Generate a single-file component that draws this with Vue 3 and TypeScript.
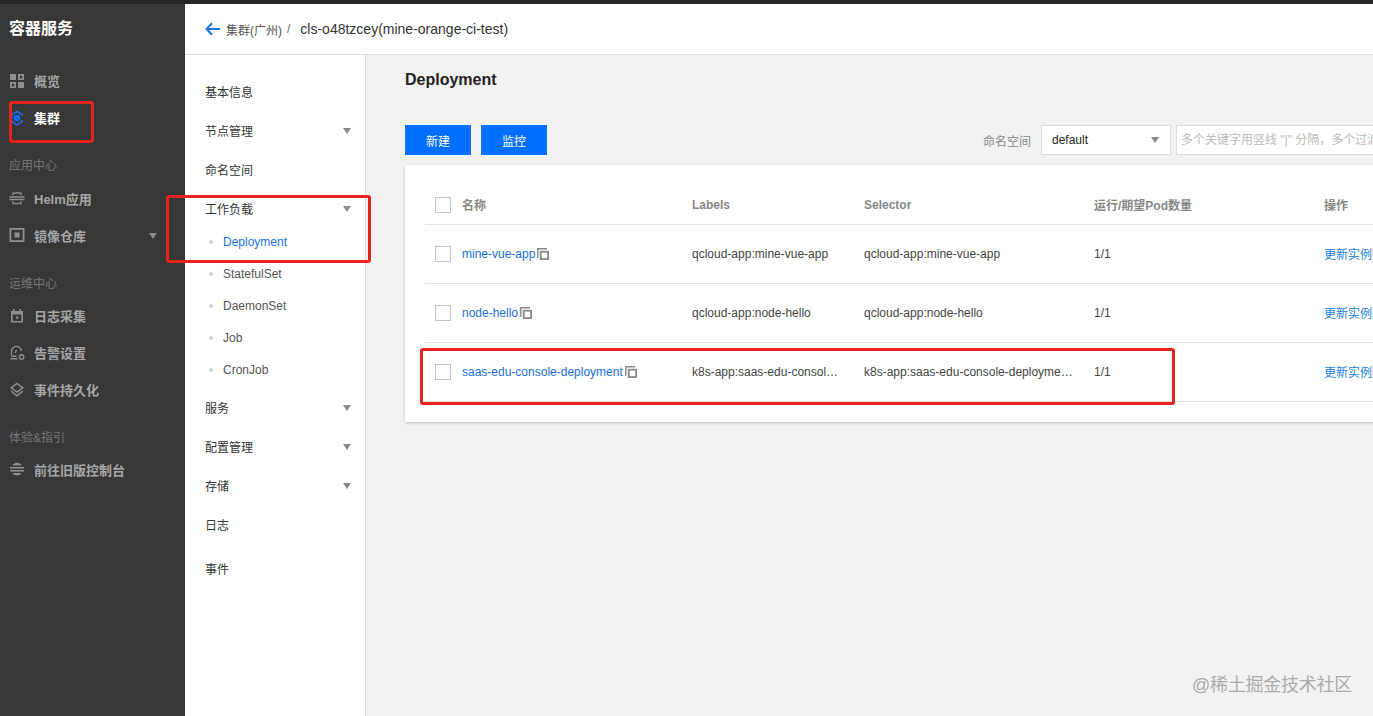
<template>
  <div class="page">
    <div class="topbar"></div>
    <div class="body">
      <aside class="sidebar">
        <div class="brand">容器服务</div>
        <template v-for="item in navItems" :key="item.text">
          <div v-if="item.group" class="nav-group">{{ item.text }}</div>
          <div v-else class="nav-item" :class="{ active: item.active }">
            <svg class="nav-icon" viewBox="0 0 16 16" width="16" height="16">
              <g v-if="item.icon === 'grid'" fill="#8f8f8f">
                <rect x="1" y="1" width="6" height="6" />
                <path d="M9 1h6v6H9zM10.8 2.8v2.4h2.4V2.8z" fill-rule="evenodd" />
                <path d="M1 9h6v6H1zM2.8 10.8v2.4h2.4v-2.4z" fill-rule="evenodd" />
                <rect x="9" y="9" width="6" height="6" />
              </g>
              <g v-else-if="item.icon === 'cluster'">
                <path d="M2.8 8V4.6L8 1.5l5.2 3.1v1.4M2.8 10v1.4L8 14.9l5.2-3.5V10" fill="none" stroke="#2468d6" stroke-width="1.8" />
                <circle cx="8" cy="8" r="3.3" fill="#0a6cff" />
              </g>
              <g v-else-if="item.icon === 'helm'" fill="none" stroke="#8f8f8f" stroke-width="1.3">
                <path d="M0.5 7h15M0.5 9.5h15" />
                <path d="M3 5C5 2 11 2 13 5M3 11.5C5 14.5 11 14.5 13 11.5" />
                <path d="M3.8 2l1 1.6M12.2 2l-1 1.6M3.8 14.5l1-1.6M12.2 14.5l-1-1.6" />
              </g>
              <g v-else-if="item.icon === 'repo'" fill="none" stroke="#8f8f8f">
                <rect x="1.4" y="1.9" width="13.2" height="12.2" stroke-width="1.8" />
                <rect x="5.5" y="5.5" width="5" height="5" fill="#8f8f8f" stroke="none" />
              </g>
              <g v-else-if="item.icon === 'calendar'" fill="#8f8f8f">
                <path d="M2 3h12v11.5H2zM3.6 6.4v6.5h8.8V6.4z" fill-rule="evenodd" />
                <rect x="4" y="1" width="1.6" height="3" />
                <rect x="10.4" y="1" width="1.6" height="3" />
                <rect x="7" y="8.5" width="2.2" height="2.2" />
              </g>
              <g v-else-if="item.icon === 'alert'" fill="none" stroke="#8f8f8f" stroke-width="1.4">
                <path d="M2.5 10.5V7a5 5 0 0 1 10-1.2" />
                <path d="M1.5 13.8h7M2.5 11.2h5" />
                <path d="M6 8l1.5-3" />
                <circle cx="12.6" cy="12" r="2.2" />
              </g>
              <g v-else-if="item.icon === 'layers'" fill="none" stroke="#8f8f8f" stroke-width="1.5">
                <path d="M8 1.5l5.8 4.3L8 10 2.2 5.8z" />
                <path d="M2.2 9.2L8 13.8l5.8-4.6" />
              </g>
              <g v-else fill="#8f8f8f">
                <path d="M3.4 4.4C4.4 2.6 6 1.8 8 1.8s3.6.8 4.6 2.6z" />
                <rect x="1" y="6" width="14" height="1.6" />
                <rect x="1" y="9" width="14" height="1.6" />
                <path d="M3.4 12c1 1.6 2.6 2.4 4.6 2.4s3.6-.8 4.6-2.4z" />
              </g>
            </svg>
            <span>{{ item.text }}</span>
            <i v-if="item.caret" class="caret nav-caret"></i>
          </div>
        </template>
      </aside>

      <div class="content">
        <header class="header">
          <svg class="back" viewBox="0 0 16 14" width="16" height="14">
            <path d="M7 1.2L1.6 7 7 12.8M1.8 7H15" fill="none" stroke="#1a73e8" stroke-width="2" />
          </svg>
          <span class="crumb">集群(广州)</span>
          <span class="crumb-sep">/</span>
          <span class="crumb-current">cls-o48tzcey(mine-orange-ci-test)</span>
        </header>

        <div class="columns">
          <nav class="submenu">
            <template v-for="m in menuItems" :key="m.text">
              <div v-if="m.sub" class="sub-item" :class="{ current: m.current }">
                <i class="dot"></i>{{ m.text }}
              </div>
              <div v-else class="menu-item" :class="{ last: m.last }">
                <span>{{ m.text }}</span>
                <i v-if="m.caret" class="caret"></i>
              </div>
            </template>
          </nav>

          <main class="main">
            <h2 class="title">Deployment</h2>
            <div class="toolbar">
              <button class="btn">新建</button>
              <button class="btn">监控</button>
              <div class="filters">
                <span class="filter-label">命名空间</span>
                <div class="select">default<i class="caret"></i></div>
                <div class="search">多个关键字用竖线 "|" 分隔，多个过滤标签用回车键分隔</div>
              </div>
            </div>

            <section class="card">
              <div class="row head">
                <div class="name-cell"><i class="check"></i>名称</div>
                <div>Labels</div>
                <div>Selector</div>
                <div>运行/期望Pod数量</div>
                <div>操作</div>
              </div>
              <div v-for="r in rows" :key="r.name" class="row">
                <div class="name-cell">
                  <i class="check"></i>
                  <a class="link">{{ r.name }}</a>
                  <svg class="copy" viewBox="0 0 12 12" width="12" height="12">
                    <path d="M0.8 10V0.8H10" fill="none" stroke="#888" stroke-width="1.4" />
                    <rect x="3.7" y="3.7" width="7.4" height="7.4" fill="none" stroke="#888" stroke-width="1.8" />
                  </svg>
                </div>
                <div class="ellipsis">{{ r.labels }}</div>
                <div class="ellipsis">{{ r.selector }}</div>
                <div>1/1</div>
                <div class="action">更新实例数量</div>
              </div>
            </section>
          </main>
        </div>
      </div>
    </div>

    <!-- 标注用的红框 -->
    <div class="mark mark-nav"></div>
    <div class="mark mark-menu"></div>
    <div class="mark mark-row"></div>
    <div class="watermark">@稀土掘金技术社区</div>
  </div>
</template>

<script setup lang="ts">
interface NavItem {
  text: string;
  icon?: string;
  group?: boolean;
  active?: boolean;
  caret?: boolean;
}

interface MenuItem {
  text: string;
  caret?: boolean;
  sub?: boolean;
  current?: boolean;
  last?: boolean;
}

const navItems: NavItem[] = [
  { text: '概览', icon: 'grid' },
  { text: '集群', icon: 'cluster', active: true },
  { text: '应用中心', group: true },
  { text: 'Helm应用', icon: 'helm' },
  { text: '镜像仓库', icon: 'repo', caret: true },
  { text: '运维中心', group: true },
  { text: '日志采集', icon: 'calendar' },
  { text: '告警设置', icon: 'alert' },
  { text: '事件持久化', icon: 'layers' },
  { text: '体验&指引', group: true },
  { text: '前往旧版控制台', icon: 'stack' }
];

const menuItems: MenuItem[] = [
  { text: '基本信息' },
  { text: '节点管理', caret: true },
  { text: '命名空间' },
  { text: '工作负载', caret: true },
  { text: 'Deployment', sub: true, current: true },
  { text: 'StatefulSet', sub: true },
  { text: 'DaemonSet', sub: true },
  { text: 'Job', sub: true },
  { text: 'CronJob', sub: true },
  { text: '服务', caret: true },
  { text: '配置管理', caret: true },
  { text: '存储', caret: true },
  { text: '日志' },
  { text: '事件', last: true }
];

const rows = [
  { name: 'mine-vue-app', labels: 'qcloud-app:mine-vue-app', selector: 'qcloud-app:mine-vue-app' },
  { name: 'node-hello', labels: 'qcloud-app:node-hello', selector: 'qcloud-app:node-hello' },
  {
    name: 'saas-edu-console-deployment',
    // 截图里这两列已被截断
    labels: 'k8s-app:saas-edu-consol…',
    selector: 'k8s-app:saas-edu-console-deployme…'
  }
];
</script>

<style>
html,
body {
  margin: 0;
  overflow: hidden;
}
</style>

<style scoped>
.page {
  position: relative;
  width: 1373px;
  height: 716px;
  overflow: hidden;
  background: #f2f2f2;
  font-family: "Liberation Sans", "Noto Sans CJK SC", sans-serif;
  font-size: 12px;
  color: #444;
}

.topbar {
  height: 4px;
  background: #262626;
}

.body {
  display: flex;
  height: 712px;
}

.sidebar {
  width: 185px;
  flex: none;
  background: #373737;
  padding-left: 9px;
  box-sizing: border-box;
}

.brand {
  height: 50px;
  line-height: 50px;
  font-size: 16px;
  font-weight: 700;
  color: #fff;
  margin-bottom: 8px;
}

.nav-item {
  position: relative;
  display: flex;
  align-items: center;
  height: 37px;
  font-weight: 700;
  font-size: 13px;
  color: #a6a6a6;
}

.nav-item.active {
  color: #fff;
}

.nav-icon {
  flex: none;
  margin-right: 9px;
}

.nav-caret {
  position: absolute;
  left: 140px;
  top: 16px;
}

.nav-group {
  height: 28.5px;
  line-height: 30.5px;
  margin-top: 15px;
  color: #777;
}

.nav-group:nth-last-child(2) {
  height: 27.5px;
}

.caret {
  display: block;
  width: 0;
  height: 0;
  border-left: 4.5px solid transparent;
  border-right: 4.5px solid transparent;
  border-top: 6px solid #8b8b8b;
}

.content {
  flex: 1;
  min-width: 0;
  display: flex;
  flex-direction: column;
}

.header {
  height: 50px;
  flex: none;
  display: flex;
  align-items: center;
  background: #fff;
  border-bottom: 1px solid #ddd;
  padding-left: 20px;
}

.back {
  margin-right: 5px;
}

.crumb {
  color: #555;
}

.crumb-sep {
  margin: 0 10px 0 5px;
  color: #666;
}

.crumb-current {
  font-size: 14px;
  color: #333;
}

.columns {
  flex: 1;
  display: flex;
  min-height: 0;
}

.submenu {
  width: 181px;
  flex: none;
  box-sizing: border-box;
  background: #fff;
  border-right: 1px solid #ddd;
  padding-top: 17px;
}

.menu-item {
  display: flex;
  align-items: center;
  justify-content: space-between;
  height: 39px;
  padding: 0 14px 0 20px;
  color: #333;
}

.menu-item.last {
  margin-top: 5px;
}

.menu-item + .sub-item {
  margin-top: -2px;
}

.sub-item + .menu-item {
  margin-top: 2px;
}

.sub-item {
  display: flex;
  align-items: center;
  height: 32px;
  padding-left: 24px;
  color: #555;
}

.sub-item.current {
  color: #1a6fdc;
}

.dot {
  width: 4px;
  height: 4px;
  border-radius: 50%;
  background: #d5d5d5;
  margin-right: 10px;
}

.main {
  flex: 1;
  min-width: 0;
  padding-left: 39px;
}

.title {
  margin: 0;
  padding-top: 15px;
  height: 40px;
  line-height: 20px;
  font-size: 16px;
  font-weight: 700;
  color: #222;
  box-sizing: content-box;
}

.toolbar {
  display: flex;
  align-items: center;
  gap: 10px;
  margin-top: 15px;
  height: 30px;
}

.btn {
  flex: none;
  width: 66px;
  height: 30px;
  border: 0;
  padding: 0;
  background: #006eff;
  color: #fff;
  font: inherit;
}

.filters {
  display: flex;
  align-items: center;
  margin-left: 426px;
  flex: none;
}

.filter-label {
  width: 58px;
  color: #888;
}

.select {
  display: flex;
  align-items: center;
  justify-content: space-between;
  width: 130px;
  height: 30px;
  box-sizing: border-box;
  padding: 0 11px 0 10px;
  background: #fff;
  border: 1px solid #ddd;
  color: #222;
}

.search {
  width: 197px;
  height: 30px;
  box-sizing: border-box;
  margin-left: 5px;
  padding-left: 4px;
  line-height: 28px;
  background: #fff;
  border: 1px solid #ddd;
  border-right: 0;
  color: #bbb;
  white-space: nowrap;
  overflow: hidden;
}

.card {
  width: 1100px;
  height: 257px;
  margin-top: 10px;
  padding: 20px 0 0 20px;
  box-sizing: border-box;
  background: #fff;
  box-shadow: 0 1px 3px rgba(0, 0, 0, 0.22);
}

.row {
  display: grid;
  grid-template-columns: 267px 172px 230px 230px 1fr;
  align-items: center;
  height: 58px;
  border-bottom: 1px solid #e3e3e3;
}

.row.head {
  height: 39px;
  font-weight: 700;
  color: #888;
}

.name-cell {
  display: flex;
  align-items: center;
  padding-left: 10px;
}

.check {
  flex: none;
  width: 14px;
  height: 14px;
  margin-right: 11px;
  background: #fff;
  border: 1px solid #c4c4c4;
}

.link {
  color: #1a6fdc;
}

.copy {
  margin-left: 2px;
}

.ellipsis {
  padding-right: 20px;
  white-space: nowrap;
  overflow: hidden;
  text-overflow: ellipsis;
}

.action {
  margin-bottom: 2px;
  color: #1a7fe0;
  white-space: nowrap;
}

.mark {
  position: absolute;
  box-sizing: border-box;
  border: 3px solid #e6231c;
  border-radius: 3px;
}

.mark-nav {
  left: 9px;
  top: 101px;
  width: 85px;
  height: 42px;
}

.mark-menu {
  left: 166px;
  top: 195px;
  width: 205px;
  height: 68px;
}

.mark-row {
  left: 420px;
  top: 348px;
  width: 755px;
  height: 57px;
}

.watermark {
  position: absolute;
  left: 1192px;
  top: 674px;
  font-size: 18px;
  line-height: 22px;
  letter-spacing: -0.25px;
  color: #ababab;
  white-space: nowrap;
}
</style>
